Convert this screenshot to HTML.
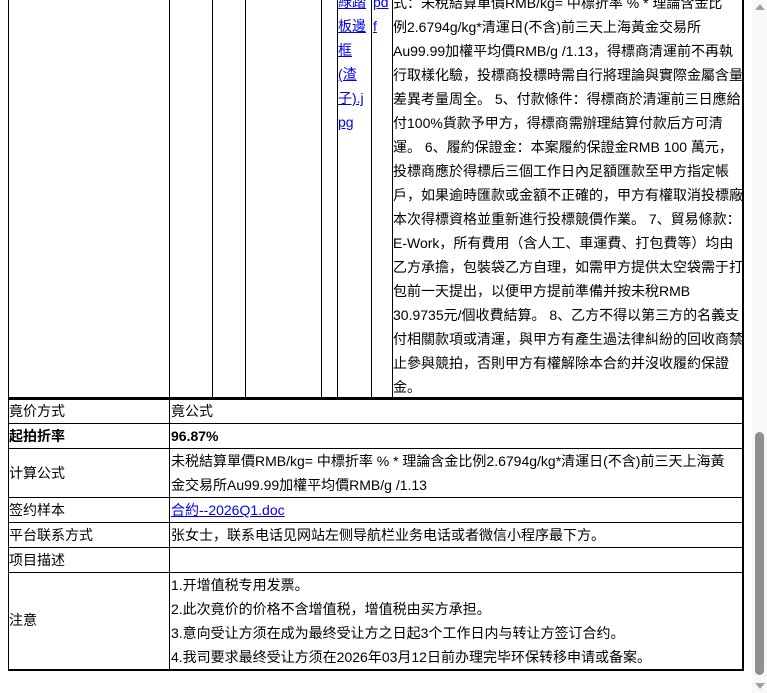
<!DOCTYPE html>
<html><head><meta charset="utf-8"><style>
*{margin:0;padding:0;box-sizing:border-box}
body{width:767px;height:693px;overflow:hidden;background:#fff;position:relative;font-family:"Liberation Sans","Noto Sans CJK SC",sans-serif;font-size:14px;color:#000}
.v{position:absolute;width:1px;background:#000}
.h{position:absolute;height:1px;background:#000}
.t{position:absolute;white-space:nowrap;line-height:24px}
a{color:#00e;text-decoration:underline}
.lt{position:absolute;white-space:nowrap;line-height:24px}
</style></head><body>
<div class="v" style="left:8px;top:0;height:398px"></div>
<div class="v" style="left:169px;top:0;height:398px"></div>
<div class="v" style="left:212px;top:0;height:398px"></div>
<div class="v" style="left:245px;top:0;height:398px"></div>
<div class="v" style="left:321px;top:0;height:398px"></div>
<div class="v" style="left:337px;top:0;height:398px"></div>
<div class="v" style="left:371px;top:0;height:398px"></div>
<div class="v" style="left:392px;top:0;height:398px"></div>
<div class="v" style="left:742px;top:0;height:398px;width:2px"></div>
<div class="h" style="left:8px;top:397px;width:736px;height:3px"></div>

<div class="t" style="left:338px;top:-10px"><a>綠踏</a><br><a>板邊</a><br><a>框</a><br><a>(渣</a><br><a>子).j</a><br><a>pg</a></div>
<div class="t" style="left:373px;top:-10px"><a>pd</a><br><a>f</a></div>
<div class="t" style="left:393px;top:-9px">式：未稅結算單價RMB/kg= 中標折率 % * 理論含金比<br>例2.6794g/kg*清運日(不含)前三天上海黃金交易所<br>Au99.99加權平均價RMB/g /1.13，得標商清運前不再執<br>行取樣化驗，投標商投標時需自行將理論與實際金屬含量<br>差異考量周全。 5、付款條件：得標商於清運前三日應給<br>付100%貨款予甲方，得標商需辦理結算付款后方可清<br>運。 6、履約保證金：本案履約保證金RMB 100 萬元，<br>投標商應於得標后三個工作日內足額匯款至甲方指定帳<br>戶，如果逾時匯款或金額不正確的，甲方有權取消投標廠<br>本次得標資格並重新進行投標競價作業。 7、貿易條款：<br>E-Work，所有費用（含人工、車運費、打包費等）均由<br>乙方承擔，包裝袋乙方自理，如需甲方提供太空袋需于打<br>包前一天提出，以便甲方提前準備并按未稅RMB<br>30.9735元/個收費結算。 8、乙方不得以第三方的名義支<br>付相關款項或清運，與甲方有產生過法律糾紛的回收商禁<br>止參與競拍，否則甲方有權解除本合約并沒收履約保證<br>金。</div>

<div class="v" style="left:8px;top:398px;height:272px"></div>
<div class="v" style="left:169px;top:398px;height:272px"></div>
<div class="v" style="left:742px;top:398px;height:273px;width:2px"></div>
<div class="h" style="left:8px;top:423px;width:736px"></div>
<div class="h" style="left:8px;top:448px;width:736px"></div>
<div class="h" style="left:8px;top:497px;width:736px"></div>
<div class="h" style="left:8px;top:522px;width:736px"></div>
<div class="h" style="left:8px;top:547px;width:736px"></div>
<div class="h" style="left:8px;top:572px;width:736px"></div>
<div class="h" style="left:8px;top:669px;width:736px;height:2px"></div>

<div class="lt" style="left:9px;top:399px">竟价方式</div>
<div class="lt" style="left:171px;top:399px">竟公式</div>
<div class="lt" style="left:9px;top:424px;font-weight:bold">起拍折率</div>
<div class="lt" style="left:171px;top:424px;font-weight:bold">96.87%</div>
<div class="lt" style="left:9px;top:461px">计算公式</div>
<div class="lt" style="left:171px;top:449px">未税結算單價RMB/kg= 中標折率 % * 理論含金比例2.6794g/kg*清運日(不含)前三天上海黃<br>金交易所Au99.99加權平均價RMB/g /1.13</div>
<div class="lt" style="left:9px;top:498px">签约样本</div>
<div class="lt" style="left:171px;top:498px"><a>合約--2026Q1.doc</a></div>
<div class="lt" style="left:9px;top:523px">平台联系方式</div>
<div class="lt" style="left:171px;top:523px">张女士，联系电话见网站左侧导航栏业务电话或者微信小程序最下方。</div>
<div class="lt" style="left:9px;top:548px">项目描述</div>
<div class="lt" style="left:9px;top:608px">注意</div>
<div class="lt" style="left:171px;top:573px">1.开增值税专用发票。<br>2.此次竟价的价格不含增值税，增值税由买方承担。<br>3.意向受让方须在成为最终受让方之日起3个工作日内与转让方签订合约。<br>4.我司要求最终受让方须在2026年03月12日前办理完毕环保转移申请或备案。</div>

<div style="position:absolute;left:752px;top:0;width:15px;height:693px;background:#f8f8f8"></div>
<div style="position:absolute;left:755px;top:432px;width:9px;height:243px;background:#8f8f8f;border-radius:5px"></div>
<div style="position:absolute;left:755px;top:4px;width:0;height:0;border-left:5px solid transparent;border-right:5px solid transparent;border-bottom:6px solid #a0a0a0"></div>
<div style="position:absolute;left:755px;top:683px;width:0;height:0;border-left:5px solid transparent;border-right:5px solid transparent;border-top:6px solid #a0a0a0"></div>
</body></html>
